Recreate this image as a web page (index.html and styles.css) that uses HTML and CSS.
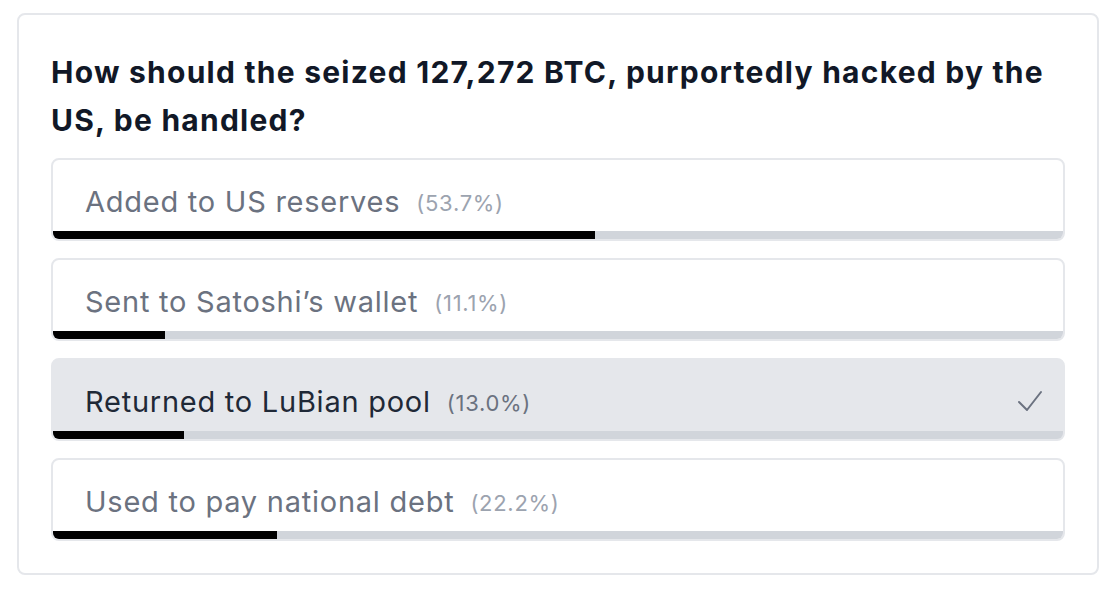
FILE: index.html
```html
<!DOCTYPE html>
<html lang="en">
<head>
<meta charset="utf-8">
<link rel="stylesheet" href="styles.css">
</head>
<body>
<div class="card">
  <h2 class="question">How should the seized 127,272 BTC, purportedly hacked by the US, be handled?</h2>
  <div class="options">
    <div class="option">
      <div class="label"><span class="text">Added to US reserves</span><span class="pct">(53.7%)</span></div>
      <div class="track"><div class="fill" style="width:53.7%"></div></div>
    </div>
    <div class="option">
      <div class="label"><span class="text">Sent to Satoshi’s wallet</span><span class="pct">(11.1%)</span></div>
      <div class="track"><div class="fill" style="width:11.1%"></div></div>
    </div>
    <div class="option selected">
      <div class="label"><span class="text">Returned to LuBian pool</span><span class="pct">(13.0%)</span>
        <svg class="check" width="26" height="22" viewBox="0 0 26 22"><path d="M2 12 L10 20 L24 2" fill="none" stroke="#6b7280" stroke-width="2" stroke-linecap="round" stroke-linejoin="round"/></svg>
      </div>
      <div class="track"><div class="fill" style="width:13.0%"></div></div>
    </div>
    <div class="option">
      <div class="label"><span class="text">Used to pay national debt</span><span class="pct">(22.2%)</span></div>
      <div class="track"><div class="fill" style="width:22.2%"></div></div>
    </div>
  </div>
</div>
</body>
</html>
```

FILE: styles.css
```css
html, body {
  margin: 0;
  padding: 0;
  background: #ffffff;
}
body {
  padding: 13px 17px 0 17px;
  font-family: Inter, "Noto Sans", "Liberation Sans", sans-serif;
}
.card {
  border: 2px solid #e5e7eb;
  border-radius: 8px;
  padding: 33px 32px 32px 32px;
  height: 562px;
  box-sizing: border-box;
}
.question {
  margin: 0 0 14px 0;
  font-size: 30px;
  line-height: 48px;
  font-weight: 700;
  color: #111827;
  letter-spacing: 1.25px;
}
.options {
  display: flex;
  flex-direction: column;
  gap: 17px;
}
.option {
  border: 2px solid #e5e7eb;
  border-radius: 8px;
  overflow: hidden;
  background: #ffffff;
  display: flex;
  flex-direction: column;
}
.option.selected {
  background: #e5e7eb;
}
.label {
  display: flex;
  align-items: center;
  height: 42px;
  padding: 20px 20px 0 32px;
  margin-bottom: 9px;
}
.text {
  font-size: 29px;
  color: #6b7280;
  letter-spacing: 0.75px;
}
.pct {
  font-size: 22px;
  color: #9ca3af;
  margin-left: 16px;
  margin-top: 3px;
  letter-spacing: 0.7px;
}
.selected .text {
  color: #1f2937;
}
.selected .pct {
  color: #6b7280;
}
.check {
  margin-left: auto;
}
.track {
  height: 8px;
  background: #d1d5db;
}
.fill {
  height: 100%;
  background: #000000;
}
```
